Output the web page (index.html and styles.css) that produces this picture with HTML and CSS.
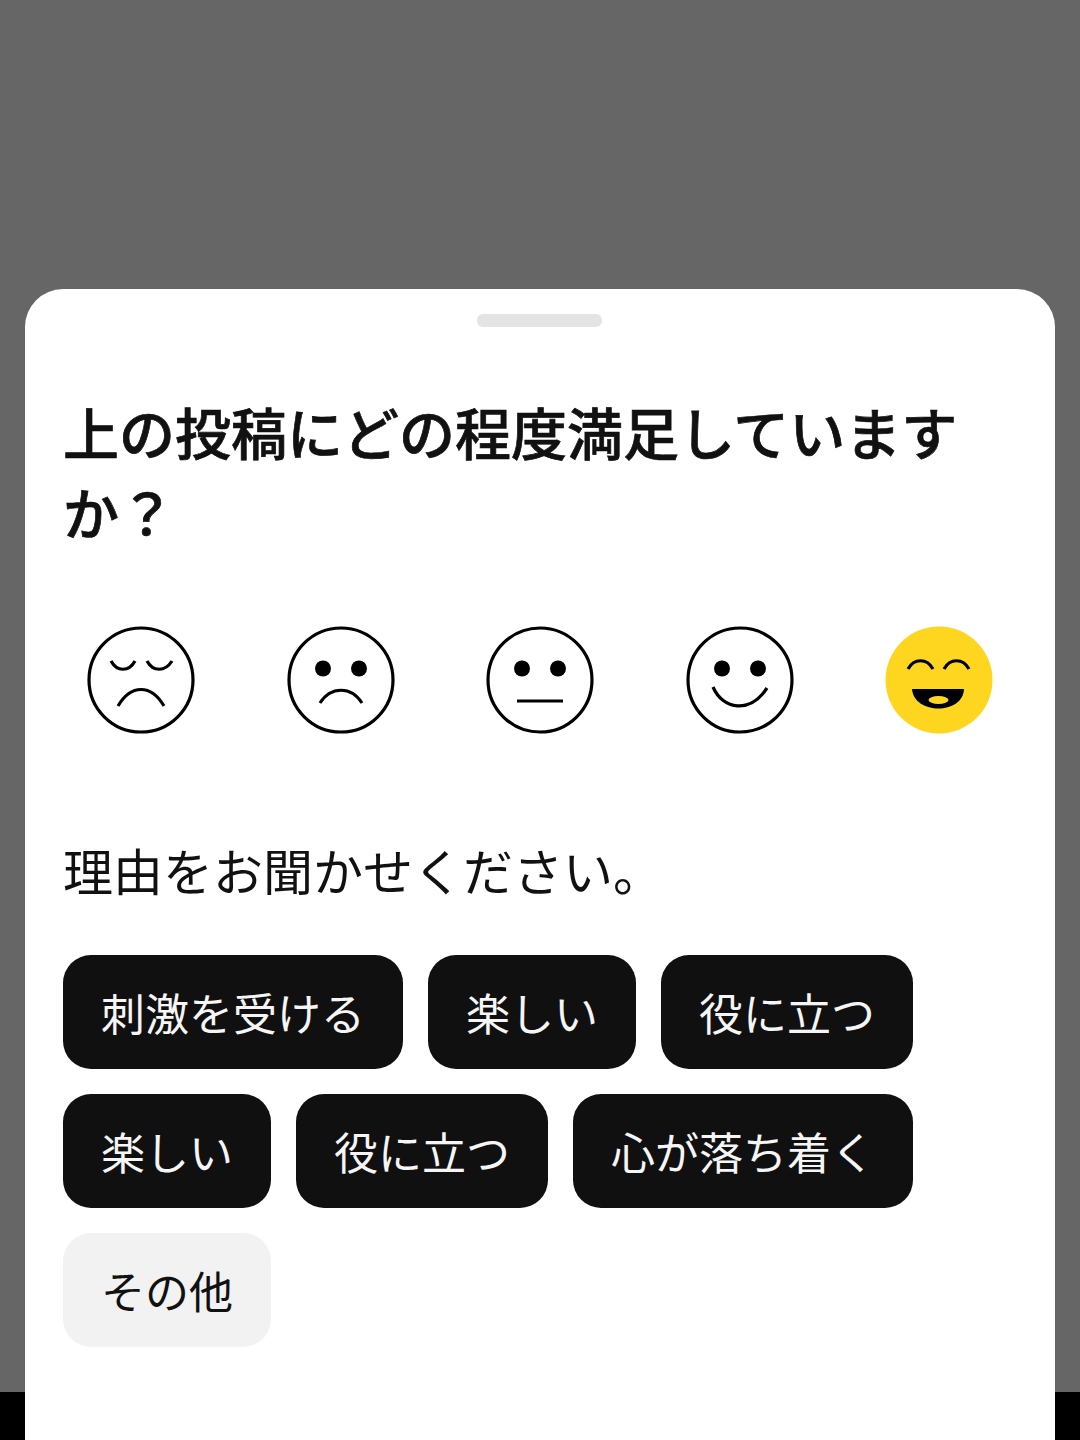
FILE: index.html
```html
<!DOCTYPE html>
<html lang="ja">
<head>
  <meta charset="UTF-8" />
  <meta name="viewport" content="width=device-width, initial-scale=1.0"/>
  <title>アンケート</title>
  <link rel="stylesheet" href="styles.css">
</head>
<body>
  <div class="backdrop"></div>
  <div class="nav-bar"></div>

  <div class="sheet">
    <div class="handle"></div>
    <h1>上の投稿にどの程度満足していますか？</h1>

    <div class="faces">
      <svg class="face" viewBox="0 0 108 108">
        <circle class="outline" cx="54" cy="54" r="52"/>
        <path class="line" d="M24 35 C30 46 42 46 48 35"/>
        <path class="line" d="M60 35 C66 46 78 46 85 35"/>
        <path class="line" d="M31 80 C44 58 64 58 77 80"/>
      </svg>
      <svg class="face" viewBox="0 0 108 108">
        <circle class="outline" cx="54" cy="54" r="52"/>
        <circle class="eye" cx="36" cy="42.5" r="8"/>
        <circle class="eye" cx="72" cy="42.5" r="8"/>
        <path class="line" d="M33 77 C44 60 64 60 75 77"/>
      </svg>
      <svg class="face" viewBox="0 0 108 108">
        <circle class="outline" cx="54" cy="54" r="52"/>
        <circle class="eye" cx="36" cy="42.5" r="8"/>
        <circle class="eye" cx="72" cy="42.5" r="8"/>
        <path class="line" d="M31 75 H77"/>
      </svg>
      <svg class="face" viewBox="0 0 108 108">
        <circle class="outline" cx="54" cy="54" r="52"/>
        <circle class="eye" cx="36" cy="42.5" r="8"/>
        <circle class="eye" cx="72" cy="42.5" r="8"/>
        <path class="line" d="M27 61 C37 84 64 88 81 62"/>
      </svg>
      <svg class="face" viewBox="0 0 108 108">
        <circle class="fill" cx="54" cy="54" r="53.5"/>
        <path class="line" d="M23 43 C29 32 42 32 48 43"/>
        <path class="line" d="M59 43 C65 32 78 32 84 43"/>
        <path class="mouth" d="M27 63 H79 C78 89 29 89 27 63 Z"/>
        <ellipse class="tongue" cx="53.5" cy="74" rx="10" ry="4"/>
      </svg>
    </div>

    <p class="reason">理由をお聞かせください。</p>

    <div class="chips">
      <button class="chip">刺激を受ける</button>
      <button class="chip">楽しい</button>
      <button class="chip">役に立つ</button>
      <button class="chip">楽しい</button>
      <button class="chip">役に立つ</button>
      <button class="chip">心が落ち着く</button>
      <button class="chip other">その他</button>
    </div>
  </div>
</body>
</html>
```

FILE: styles.css
```css
html, body {
  height: 100%;
}

body {
  margin: 0;
  height: 1440px;
  overflow: hidden;
  display: flex;
  flex-direction: column;
  font-family: "Noto Sans CJK JP", "Noto Sans", sans-serif;
  color: #111;
  background-color: #000;
}

.backdrop {
  height: 1392px;
  background-color: #666;
}

.nav-bar {
  flex: 1;
  background-color: #000;
}

.sheet {
  position: absolute;
  top: 289px;
  left: 25px;
  width: 1030px;
  height: 1151px;
  box-sizing: border-box;
  padding: 25px 38px 0;
  background-color: #fff;
  border-radius: 38px 38px 0 0;
}

.handle {
  width: 125px;
  height: 13px;
  margin-left: 414px;
  background-color: #e4e4e4;
  border-radius: 6px;
}

h1 {
  margin: 64px 0 0;
  font-size: 56px;
  font-weight: 500;
  -webkit-text-stroke: 0.7px #111;
  line-height: 80px;
}

.faces {
  display: flex;
  justify-content: space-between;
  margin-top: 75px;
  padding: 0 24px;
}

.face {
  width: 108px;
  height: 108px;
}

.outline {
  fill: #fff;
  stroke: #000;
  stroke-width: 3.2;
}

.line {
  fill: none;
  stroke: #000;
  stroke-width: 3.2;
}

.eye {
  fill: #000;
}

.fill {
  fill: #ffd61f;
}

.mouth {
  fill: #000;
}

.tongue {
  fill: #ffd61f;
}

.reason {
  margin: 99px 0 0;
  font-size: 50px;
  font-weight: 400;
  line-height: 72px;
}

.chips {
  display: flex;
  flex-wrap: wrap;
  gap: 25px;
  margin-top: 50px;
  width: 900px;
}

.chip {
  height: 114px;
  padding: 0 38px;
  border: none;
  border-radius: 28px;
  background-color: #101010;
  color: #f5f5f5;
  font-family: inherit;
  font-size: 44px;
  font-weight: 400;
}

.chip.other {
  background-color: #f2f2f2;
  color: #111;
}
```
